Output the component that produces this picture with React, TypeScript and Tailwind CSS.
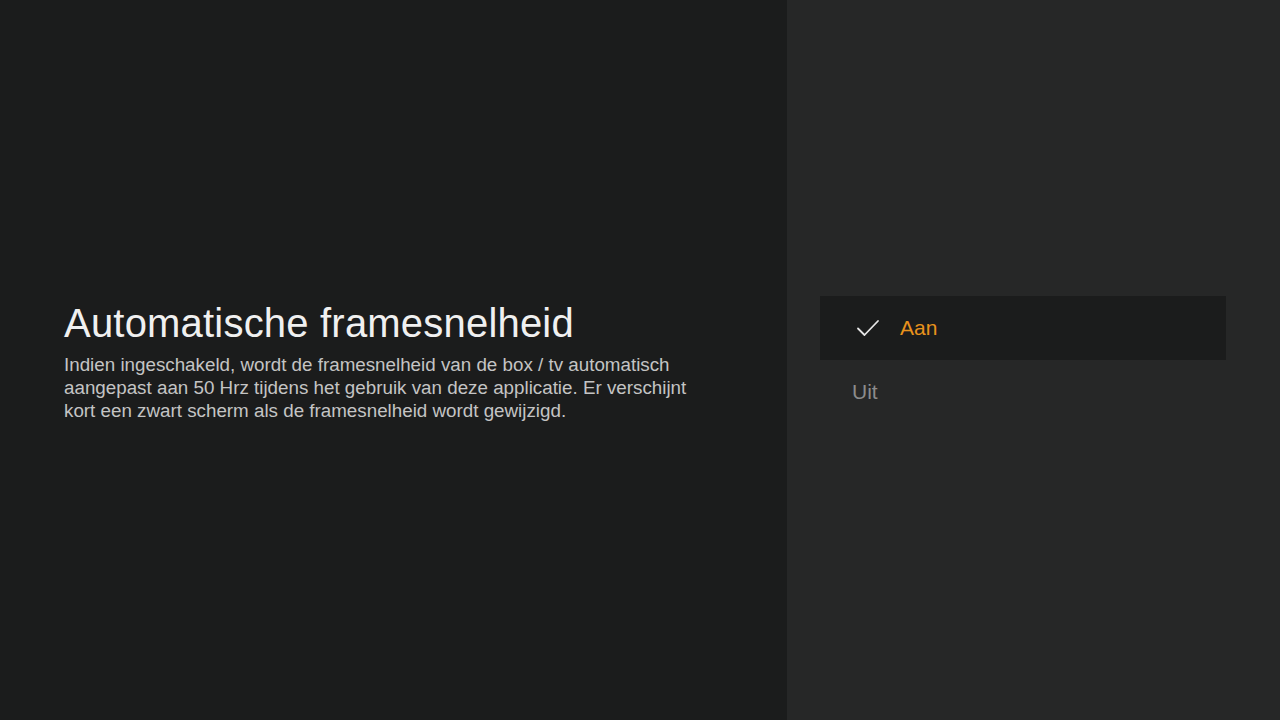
import React from "react";

const options = [
  { label: "Aan", selected: true },
  { label: "Uit", selected: false },
];

const CheckMark: React.FC = () => (
  <svg width="24" height="18" viewBox="0 0 24 18" fill="none" className="shrink-0">
    <path d="M2 9.5 L8.5 16 L22 2" stroke="#e6e6e6" strokeWidth="1.8" strokeLinecap="round" strokeLinejoin="round" />
  </svg>
);

const App: React.FC = () => {
  return (
    <div
      className="flex h-[720px] w-[1280px] overflow-hidden"
      style={{ fontFamily: '"Liberation Sans", Arial, sans-serif' }}
    >
      {/* Left info panel */}
      <div className="flex w-[787px] flex-col justify-center bg-[#1b1c1c] pl-[64px] pr-[20px]">
        <h1 className="text-[40px] leading-[48px] tracking-[0.2px] text-[#f0f0f0]">
          Automatische framesnelheid
        </h1>
        <p className="mt-[6px] w-[645px] text-[18.8px] leading-[23px] text-[#c4c4c4]">
          Indien ingeschakeld, wordt de framesnelheid van de box / tv automatisch
          aangepast aan 50 Hrz tijdens het gebruik van deze applicatie. Er verschijnt
          kort een zwart scherm als de framesnelheid wordt gewijzigd.
        </p>
      </div>

      {/* Right options panel */}
      <div className="flex flex-1 flex-col justify-center bg-[#262727] pl-[33px] pr-[54px]">
        {options.map((opt) => (
          <div
            key={opt.label}
            className={
              opt.selected
                ? "flex h-[64px] items-center bg-[#1b1c1c] pl-[36px]"
                : "flex h-[64px] items-center pl-[32px]"
            }
          >
            {opt.selected && <CheckMark />}
            <span
              className={
                opt.selected
                  ? "ml-[20px] text-[21px] text-[#e8921c]"
                  : "text-[21px] text-[#8c8c8c]"
              }
            >
              {opt.label}
            </span>
          </div>
        ))}
      </div>
    </div>
  );
};

export default App;
